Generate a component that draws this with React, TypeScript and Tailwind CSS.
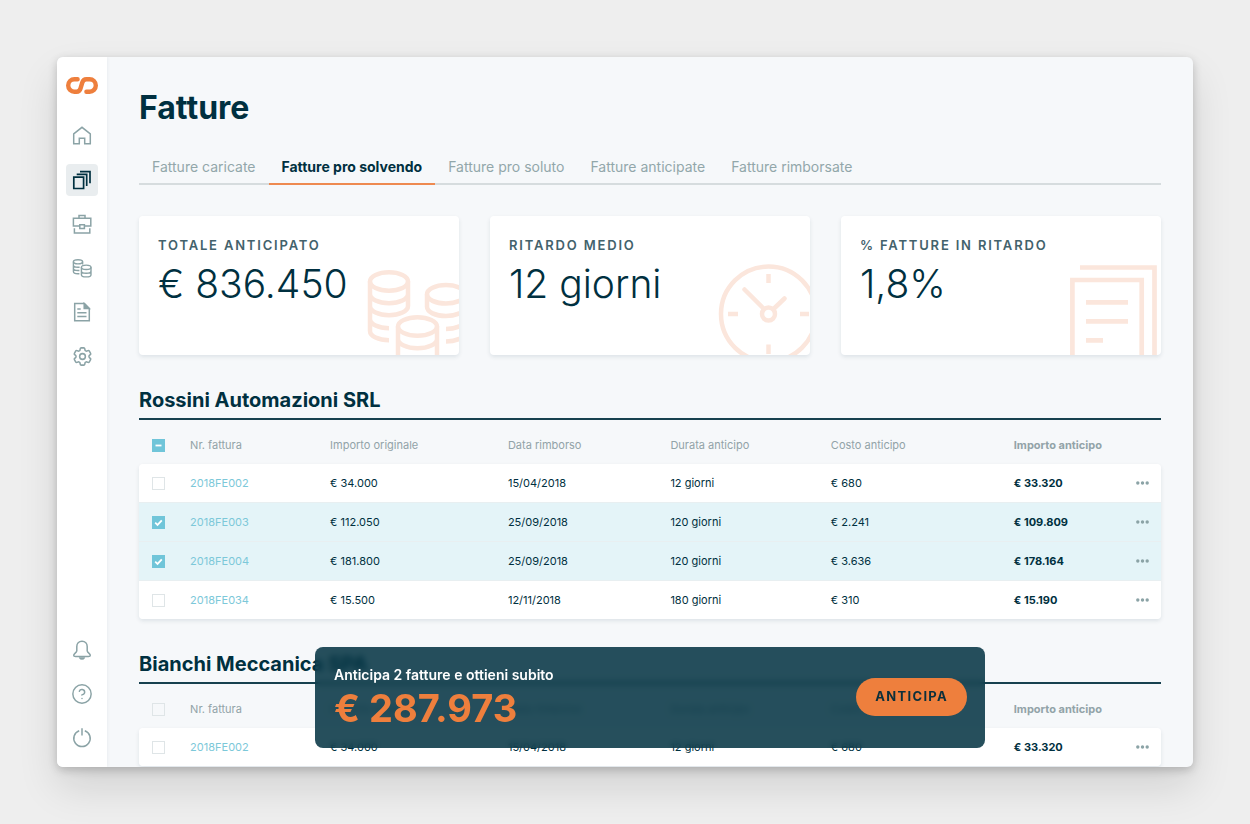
import { useEffect, useRef, useState } from 'react';
import type { ReactNode } from 'react';
import { CircleHelp } from 'lucide-react';
import { HiOutlineCog6Tooth } from 'react-icons/hi2';

type Invoice = {
  number: string;
  original: string;
  refundDate: string;
  duration: string;
  cost: string;
  advance: string;
};

const tabs = [
  'Fatture caricate',
  'Fatture pro solvendo',
  'Fatture pro soluto',
  'Fatture anticipate',
  'Fatture rimborsate',
];

const rossiniInvoices: Invoice[] = [
  { number: '2018FE002', original: '€ 34.000', refundDate: '15/04/2018', duration: '12 giorni', cost: '€ 680', advance: '€ 33.320' },
  { number: '2018FE003', original: '€ 112.050', refundDate: '25/09/2018', duration: '120 giorni', cost: '€ 2.241', advance: '€ 109.809' },
  { number: '2018FE004', original: '€ 181.800', refundDate: '25/09/2018', duration: '120 giorni', cost: '€ 3.636', advance: '€ 178.164' },
  { number: '2018FE034', original: '€ 15.500', refundDate: '12/11/2018', duration: '180 giorni', cost: '€ 310', advance: '€ 15.190' },
];

const bianchiInvoices: Invoice[] = [
  { number: '2018FE002', original: '€ 34.000', refundDate: '15/04/2018', duration: '12 giorni', cost: '€ 680', advance: '€ 33.320' },
];

function Icon({ children, strokeWidth = 1.5 }: { children: ReactNode; strokeWidth?: number }) {
  return (
    <svg viewBox="0 0 20 20" className="h-5 w-5" fill="none" stroke="currentColor" strokeWidth={strokeWidth} aria-hidden="true">
      {children}
    </svg>
  );
}

const mainNav = [
  {
    label: 'Home',
    icon: (
      <Icon>
        <path d="M1.7 7.8 10 1.3l8.3 6.5v9.9h-5.6v-5.4H7.3v5.4H1.7z" />
      </Icon>
    ),
  },
  {
    label: 'Fatture',
    icon: (
      <Icon strokeWidth={1.7}>
        <path d="M1.8 7.1h9.8v11.4H1.8zM4.7 4.3h10V16M8 1.7h10v11.6" />
      </Icon>
    ),
  },
  {
    label: 'Portafoglio',
    icon: (
      <Icon>
        <path d="M7 4V1.5h6V4M7.6 12H1.4V4.2h17.4V12h-6.2M7.8 10.8h4.6v3.6H7.8zM2.4 14.2v4.9h15.4v-4.9" />
      </Icon>
    ),
  },
  {
    label: 'Anticipi',
    icon: (
      <Icon strokeWidth={1.4}>
        <ellipse cx="6" cy="3.8" rx="4.6" ry="2.1" />
        <path d="M1.4 3.8v9.8c0 1.200 2 2.200 4.600 2.200h1.400M10.600 3.800v2.600M1.400 7c0 1.200 2 2.200 4.600 2.200h1.600M1.400 10.300c0 1.200 2 2.200 4.600 2.200h1.400" />
        <ellipse cx="14.2" cy="9.3" rx="4.8" ry="2.2" />
        <path d="M9.4 9.3v7.4c0 1.2 2.1 2.2 4.8 2.2s4.8-1 4.8-2.2V9.3M9.4 13c0 1.2 2.1 2.2 4.8 2.2s4.8-1 4.8-2.2" />
      </Icon>
    ),
  },
  {
    label: 'Documenti',
    icon: (
      <Icon>
        <path d="M2.7 1.6h9.7l4.900 4.900v12.300H2.700zM5.300 10.700h9.200M5.300 14.500h9.200M5.300 7h3.400" />
        <path d="M12.2 1.6v5h5z" fill="currentColor" />
      </Icon>
    ),
  },
  { label: 'Impostazioni', icon: <HiOutlineCog6Tooth className="h-[23px] w-[23px]" strokeWidth={1.6} aria-hidden="true" /> },
];

const bottomNav = [
  {
    label: 'Notifiche',
    icon: (
      <Icon>
        <path d="M10 1.2c-3.2 0-5.2 2.3-5.2 5.4v4.2c0 2-3.1 2.7-3.1 4.5 0 .9.8 1.3 1.8 1.3h13c1 0 1.8-.4 1.8-1.3 0-1.8-3.1-2.5-3.1-4.5V6.600c0-3.100-2-5.400-5.200-5.400z" />
        <path d="M8 18.100c.5 1.100 3.500 1.100 4 0z" fill="currentColor" />
      </Icon>
    ),
  },
  { label: 'Aiuto', icon: <CircleHelp size={22} strokeWidth={1.6} aria-hidden="true" /> },
  {
    label: 'Esci',
    icon: (
      <Icon>
        <path d="M7.200 2.700a8.200 8.200 0 1 0 5.600 0M10 .3v7.200" />
      </Icon>
    ),
  },
];

function NavButton({ label, icon, active = false }: { label: string; icon: ReactNode; active?: boolean }) {
  return (
    <button
      type="button"
      aria-label={label}
      aria-current={active ? 'page' : undefined}
      className={`flex h-8 w-8 items-center justify-center rounded ${active ? 'bg-[#e9edef] text-[#003040]' : 'text-[#8ba3a6]'}`}
    >
      {icon}
    </button>
  );
}

function Sidebar() {
  return (
    <aside className="z-10 flex w-[50px] shrink-0 flex-col items-center bg-white pt-5 pb-[13px] shadow-[0_0_4px_rgba(0,48,64,0.08)]">
      <svg viewBox="0 0 32 17" className="h-[17px] w-8 shrink-0" fill="none" stroke="#ee7f3d" strokeWidth="4.4" strokeLinecap="round" aria-label="Logo" role="img">
        <path d="M11.600 2.300H8.400a6.200 6.200 0 0 0 0 12.400h2.200c2.300 0 3.300-1.200 3.900-3.200l1.800-6c.6-2 1.700-3.200 4-3.200h3.300a6.200 6.200 0 0 1 0 12.400h-3.200" />
      </svg>
      <nav className="mt-[26px] flex flex-col gap-3">
        {mainNav.map((item) => (
          <NavButton key={item.label} {...item} active={item.label === 'Fatture'} />
        ))}
      </nav>
      <div className="mt-auto flex flex-col gap-3">
        {bottomNav.map((item) => (
          <NavButton key={item.label} {...item} />
        ))}
      </div>
    </aside>
  );
}

function CoinsArt() {
  return (
    <svg viewBox="0 0 93 91" className="absolute right-0 bottom-0 h-[91px] w-[93px]" fill="none" stroke="#fbe6dc" strokeWidth="4.5" aria-hidden="true">
      <ellipse cx="23" cy="17.5" rx="19" ry="9.3" />
      <path d="M4 17.5V67a19 9.3 0 0 0 19 9.3M4 55a19 9.3 0 0 0 19 9.3M42 17.5V42M4 30a19 9.3 0 0 0 38 0M4 42a19 9.3 0 0 0 38 0" />
      <ellipse cx="80" cy="30.3" rx="19" ry="9.3" />
      <path d="M61 30.3v12.5a19 9.3 0 0 0 38 0M80 65a19 9.3 0 0 0 19-9.3M80 77.5a19 9.3 0 0 0 19-9.3" />
      <ellipse cx="51.5" cy="62.5" rx="19.5" ry="9.3" />
      <path d="M32 62.5V95M71 62.5V95M32 75a19.5 9.3 0 0 0 39 0" />
    </svg>
  );
}

function ClockArt() {
  return (
    <svg viewBox="0 0 92 91" className="absolute right-0 bottom-0 h-[91px] w-[92px]" fill="none" stroke="#fbe6dc" strokeWidth="4.5" aria-hidden="true">
      <circle cx="50.5" cy="50" r="47.5" />
      <circle cx="50.5" cy="50" r="6.5" />
      <path d="M50.5 10v9M50.5 80.5V90M10 50h10M82 50h9" />
      <path d="m26.5 25.5 19 19M66.5 34.5 55.5 45" strokeLinecap="round" />
    </svg>
  );
}

function DocumentsArt() {
  return (
    <svg viewBox="0 0 91 91" className="absolute right-0 bottom-0 h-[91px] w-[91px]" fill="none" stroke="#fbe6dc" strokeWidth="4.7" aria-hidden="true">
      <path d="M2.4 91V16h69.3v75M10 3.5h74.5V91M16 38.3h42M16 57.3h42M16 76.3h17" />
    </svg>
  );
}

function StatCard({ label, value, art }: { label: string; value: string; art: ReactNode }) {
  return (
    <div className="relative h-[139px] overflow-hidden rounded bg-white px-[19px] pt-[19px] shadow-[0_2px_4px_rgba(0,48,64,0.1)]">
      {art}
      <p className="relative text-[13px] leading-5 font-semibold tracking-[0.14em] text-[#43626c]">{label}</p>
      <p className="relative mt-1 text-[39px] leading-[50px] font-light">{value}</p>
    </div>
  );
}

type CheckProps = { label: string; checked: boolean; partial?: boolean; onChange: () => void };

function Checkbox({ label, checked, partial = false, onChange }: CheckProps) {
  const ref = useRef<HTMLInputElement>(null);

  useEffect(() => {
    if (ref.current) ref.current.indeterminate = partial;
  }, [partial]);

  return (
    <span className="ml-[13px] grid h-[13px] w-[13px]">
      <input
        ref={ref}
        type="checkbox"
        aria-label={label}
        checked={checked}
        onChange={onChange}
        className="col-start-1 row-start-1 h-[13px] w-[13px] appearance-none border border-[#dfe5e7] checked:border-[#70c5d9] checked:bg-[#70c5d9] indeterminate:border-[#70c5d9] indeterminate:bg-[#70c5d9]"
      />
      {checked || partial ? (
        <svg viewBox="0 0 13 13" className="pointer-events-none col-start-1 row-start-1 h-[13px] w-[13px]" fill="none" stroke="white" strokeWidth="1.8" aria-hidden="true">
          <path d={partial ? 'M3.5 6.5h6' : 'm3.2 6.7 2.3 2.2 4.3-4.6'} />
        </svg>
      ) : null}
    </span>
  );
}

function InvoiceSection({ title, invoices, initial = [] }: { title: string; invoices: Invoice[]; initial?: string[] }) {
  const [selected, setSelected] = useState<string[]>(initial);
  const all = selected.length === invoices.length;

  function toggle(number: string) {
    setSelected((prev) => (prev.includes(number) ? prev.filter((n) => n !== number) : [...prev, number]));
  }

  return (
    <section>
      <h2 className="border-b-2 border-[#17414f] pb-1 text-[20px] leading-7 font-bold">{title}</h2>
      <table className="w-full table-fixed border-separate border-spacing-0 text-left text-[11px]">
        <colgroup>
          <col className="w-[5%]" />
          <col className="w-[13.7%]" />
          <col className="w-[17.4%]" />
          <col className="w-[15.9%]" />
          <col className="w-[15.7%]" />
          <col className="w-[17.9%]" />
          <col />
        </colgroup>
        <thead>
          <tr className="h-11 text-[#92a3a8] *:pt-1.5 *:font-normal">
            <th scope="col">
              <Checkbox
                label={`Seleziona tutte: ${title}`}
                checked={all}
                partial={selected.length > 0 && !all}
                onChange={() => setSelected(all ? [] : invoices.map((i) => i.number))}
              />
            </th>
            <th scope="col">Nr. fattura</th>
            <th scope="col">Importo originale</th>
            <th scope="col">Data rimborso</th>
            <th scope="col">Durata anticipo</th>
            <th scope="col">Costo anticipo</th>
            <th scope="col"><span className="font-bold">Importo anticipo</span></th>
          </tr>
        </thead>
        <tbody className="rounded shadow-[0_2px_4px_rgba(0,48,64,0.1)] [&>tr:first-child>td:first-child]:rounded-tl [&>tr:first-child>td:last-child]:rounded-tr [&>tr:last-child>td:first-child]:rounded-bl [&>tr:last-child>td:last-child]:rounded-br">
          {invoices.map((invoice) => {
            const checked = selected.includes(invoice.number);

            return (
              <tr
                key={invoice.number}
                className={`h-[39px] *:border-[#e8eff1] not-last:*:border-b last:h-[38px] ${checked ? '*:bg-[#e4f4f8]' : '*:bg-white'}`}
              >
                <td><Checkbox label={`Seleziona ${invoice.number}`} checked={checked} onChange={() => toggle(invoice.number)} /></td>
                <td><a href="#fattura" className="text-[#7cc8d9]">{invoice.number}</a></td>
                <td>{invoice.original}</td>
                <td>{invoice.refundDate}</td>
                <td>{invoice.duration}</td>
                <td>{invoice.cost}</td>
                <td>
                  <div className="flex items-center justify-between pr-3">
                    <span className="font-bold">{invoice.advance}</span>
                    <button type="button" aria-label={`Azioni ${invoice.number}`} className="text-[#8ba3a6]">
                      <svg viewBox="0 0 13 4" className="h-1 w-[13px]" fill="currentColor" aria-hidden="true">
                        <circle cx="1.8" cy="2" r="1.7" />
                        <circle cx="6.5" cy="2" r="1.7" />
                        <circle cx="11.2" cy="2" r="1.7" />
                      </svg>
                    </button>
                  </div>
                </td>
              </tr>
            );
          })}
        </tbody>
      </table>
    </section>
  );
}

function AdvanceBar() {
  return (
    <div className="absolute inset-x-0 bottom-[19px] flex justify-center">
      <div className="flex w-[670px] max-w-full items-center justify-between rounded-lg bg-[#003040]/85 pt-[17px] pr-[18px] pb-[18px] pl-[19px] backdrop-blur-[3px]">
        <div>
          <p className="text-[14px] leading-[22px] font-semibold text-white">Anticipa 2 fatture e ottieni subito</p>
          <p className="text-[38px] leading-[44px] font-bold text-[#ee7f3d]">€ 287.973</p>
        </div>
        <button type="button" className="h-[38px] rounded-full bg-[#ee7f3d] px-[19px] text-[13px] font-bold tracking-widest text-[#0b2f3b]">
          ANTICIPA
        </button>
      </div>
    </div>
  );
}

export default function App() {
  const [activeTab, setActiveTab] = useState(tabs[1]);

  return (
    <div className="h-screen bg-[#eeeeee] p-[57px] font-['Inter','Liberation_Sans',sans-serif] text-[#003040]">
      <div className="flex h-full overflow-hidden rounded-md bg-[#f6f8fa] shadow-[0_20px_40px_rgba(0,0,0,0.12),0_3px_10px_rgba(0,0,0,0.2)]">
        <Sidebar />
        <main className="relative min-w-0 flex-1 overflow-hidden">
          <div className="flex flex-col gap-[31px] px-8 pt-[31px]">
            <header>
              <h1 className="text-[32px] leading-10 font-bold">Fatture</h1>
              <nav className="mt-[22px] flex border-b-2 border-[#d6dcde]">
                {tabs.map((tab) => (
                  <button
                    key={tab}
                    type="button"
                    onClick={() => setActiveTab(tab)}
                    className={`-mb-0.5 h-[35px] border-b-2 px-[13px] text-[14px] ${
                      tab === activeTab ? 'border-[#ee8a50] font-bold' : 'border-transparent text-[#92a7aa]'
                    }`}
                  >
                    {tab}
                  </button>
                ))}
              </nav>
            </header>

            <div className="grid grid-cols-3 gap-[31px]">
              <StatCard label="TOTALE ANTICIPATO" value="€ 836.450" art={<CoinsArt />} />
              <StatCard label="RITARDO MEDIO" value="12 giorni" art={<ClockArt />} />
              <StatCard label="% FATTURE IN RITARDO" value="1,8%" art={<DocumentsArt />} />
            </div>

            <InvoiceSection title="Rossini Automazioni SRL" invoices={rossiniInvoices} initial={['2018FE003', '2018FE004']} />
            <InvoiceSection title="Bianchi Meccanica SPA" invoices={bianchiInvoices} />
          </div>
          <AdvanceBar />
        </main>
      </div>
    </div>
  );
}
